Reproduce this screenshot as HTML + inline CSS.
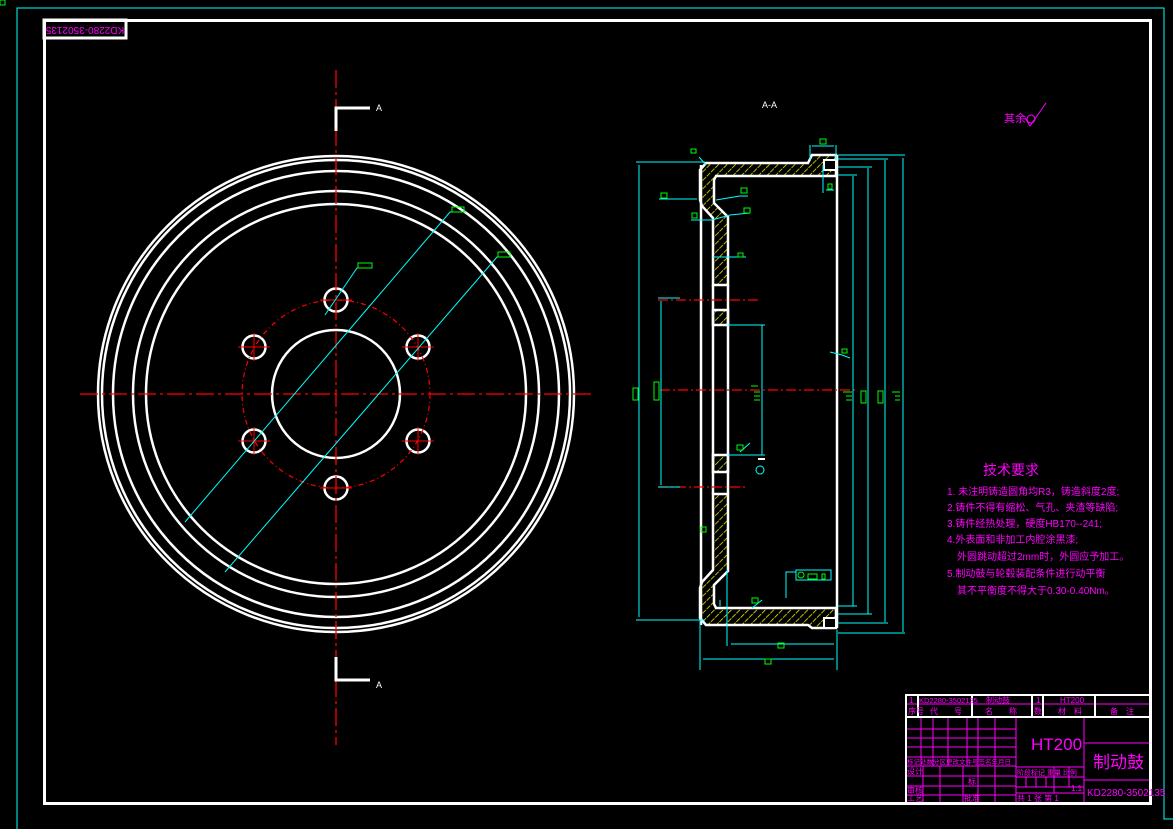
<!DOCTYPE html>
<html><head><meta charset="utf-8"><style>
html,body{margin:0;padding:0;background:#000;}
svg{display:block;}
text{font-family:"Liberation Sans","Noto Sans CJK SC",sans-serif;}
</style></head><body>
<svg width="1173" height="829" viewBox="0 0 1173 829" xmlns="http://www.w3.org/2000/svg">
<defs>
<pattern id="h" patternUnits="userSpaceOnUse" width="6" height="6" patternTransform="rotate(45)">
<rect width="6" height="6" fill="#000"/><line x1="0" y1="0" x2="0" y2="6" stroke="#e8e800" stroke-width="1.6" stroke-dasharray="3 1"/>
</pattern>
</defs>
<rect width="1173" height="829" fill="#000"/>
<!-- outer cyan -->
<polyline points="17,829 17,8 1164,8 1164,819 1173,819" fill="none" stroke="#00ffff" stroke-width="1"/>
<rect x="0" y="0" width="5" height="5" fill="none" stroke="#00ff00" stroke-width="1"/>
<!-- white frame -->
<rect x="44.5" y="20.5" width="1106" height="783" fill="none" stroke="#fff" stroke-width="3"/>
<rect x="44" y="20" width="82" height="18" fill="none" stroke="#fff" stroke-width="3"/>
<text x="85" y="33" fill="#ff00ff" font-size="10" text-anchor="middle" transform="rotate(180 85 30)">KD2280-3502135</text>

<!-- LEFT VIEW -->
<g fill="none" stroke="#fff" stroke-width="2.5">
<circle cx="336" cy="394" r="238"/>
<circle cx="336" cy="394" r="234"/>
<circle cx="336" cy="394" r="223"/>
<circle cx="336" cy="394" r="203"/>
<circle cx="336" cy="394" r="190"/>
<circle cx="336" cy="394" r="64"/>
<circle cx="336" cy="300" r="11.5"/>
<circle cx="254" cy="347" r="11.5"/>
<circle cx="418" cy="347" r="11.5"/>
<circle cx="254" cy="441" r="11.5"/>
<circle cx="418" cy="441" r="11.5"/>
<circle cx="336" cy="488" r="11.5"/>
</g>
<circle cx="336" cy="394" r="94" fill="none" stroke="#ff0000" stroke-width="1.2" stroke-dasharray="5 3 1 3"/>
<line x1="80" y1="394" x2="595" y2="394" stroke="#ff0000" stroke-width="1.3" stroke-dasharray="18 4 3 4"/>
<line x1="336" y1="70" x2="336" y2="745" stroke="#ff0000" stroke-width="1.3" stroke-dasharray="18 4 3 4"/>
<g stroke="#ff0000" stroke-width="1">
<line x1="320" y1="300" x2="352" y2="300"/><line x1="238" y1="347" x2="270" y2="347"/><line x1="402" y1="347" x2="434" y2="347"/>
<line x1="238" y1="441" x2="270" y2="441"/><line x1="402" y1="441" x2="434" y2="441"/><line x1="320" y1="488" x2="352" y2="488"/>
<line x1="254" y1="333" x2="254" y2="361"/><line x1="418" y1="333" x2="418" y2="361"/>
<line x1="254" y1="427" x2="254" y2="455"/><line x1="418" y1="427" x2="418" y2="455"/>
</g>
<g stroke="#00ffff" stroke-width="1" fill="none">
<polyline points="185,522 450,212 466,212"/>
<polyline points="225,572 497,257 511,257"/>
<polyline points="325,315 357,268 372,268"/>
</g>
<g fill="none" stroke="#00ff00" stroke-width="1">
<rect x="452" y="207" width="12" height="5"/><rect x="498" y="252" width="12" height="5"/><rect x="358" y="263" width="14" height="5"/>
</g>
<g stroke="#fff" stroke-width="3" fill="none">
<polyline points="336,131 336,108 370,108"/>
<polyline points="336,657 336,680 370,680"/>
</g>
<text x="376" y="111" fill="#fff" font-size="9">A</text>
<text x="376" y="688" fill="#fff" font-size="9">A</text>
<text x="762" y="108" fill="#fff" font-size="9">A-A</text>

<!-- SECTION VIEW -->
<!-- top hatched -->
<path d="M700,170 L706,163 L808,163 L812,155 L836,155 L836,176 L716,176 L714,180 L714,203 L728,217 L728,285 L713,285 L713,218 L702,206 L700,200 Z" fill="url(#h)" stroke="#fff" stroke-width="2.5"/>
<path d="M713,310 L728,310 L728,325 L713,325 Z" fill="url(#h)" stroke="#fff" stroke-width="2.5"/>
<path d="M713,455 L728,455 L728,472 L713,472 Z" fill="url(#h)" stroke="#fff" stroke-width="2.5"/>
<path d="M700,618 L706,625 L808,625 L812,628 L836,628 L836,608 L716,608 L714,604 L714,585 L728,571 L728,494 L713,494 L713,570 L702,582 L700,588 Z" fill="url(#h)" stroke="#fff" stroke-width="2.5"/>
<rect x="824" y="160" width="12" height="10" fill="#000" stroke="#fff" stroke-width="2"/>
<rect x="824" y="618" width="12" height="10" fill="#000" stroke="#fff" stroke-width="2"/>
<g stroke="#fff" stroke-width="2.5">
<line x1="701" y1="165" x2="701" y2="625"/>
<line x1="837" y1="155" x2="837" y2="628"/>
<line x1="713" y1="285" x2="713" y2="494"/>
<line x1="728" y1="285" x2="728" y2="494"/>
</g>
<line x1="658" y1="300" x2="758" y2="300" stroke="#ff0000" stroke-width="1.2" stroke-dasharray="10 3 2 3"/>
<line x1="658" y1="487" x2="745" y2="487" stroke="#ff0000" stroke-width="1.2" stroke-dasharray="10 3 2 3"/>
<line x1="660" y1="390" x2="855" y2="390" stroke="#ff0000" stroke-width="1.2" stroke-dasharray="10 3 2 3"/>
<g stroke="#00ffff" stroke-width="1" fill="none">
<line x1="636" y1="162" x2="705" y2="162"/><line x1="639" y1="165" x2="639" y2="617"/><line x1="636" y1="620" x2="705" y2="620"/>
<line x1="658" y1="298" x2="680" y2="298"/><line x1="661" y1="301" x2="661" y2="485"/><line x1="658" y1="487" x2="680" y2="487"/>
<line x1="728" y1="325" x2="765" y2="325"/><line x1="762" y1="325" x2="762" y2="455"/><line x1="728" y1="455" x2="765" y2="455"/>
<line x1="838" y1="155" x2="905" y2="155"/><line x1="903" y1="158" x2="903" y2="632"/><line x1="838" y1="633" x2="905" y2="633"/>
<line x1="838" y1="159" x2="888" y2="159"/><line x1="885" y1="160" x2="885" y2="622"/><line x1="838" y1="623" x2="888" y2="623"/>
<line x1="838" y1="167" x2="872" y2="167"/><line x1="868" y1="168" x2="868" y2="614"/><line x1="838" y1="614" x2="872" y2="614"/>
<line x1="838" y1="175" x2="857" y2="175"/><line x1="853" y1="176" x2="853" y2="606"/><line x1="838" y1="606" x2="857" y2="606"/>
<line x1="700" y1="620" x2="700" y2="670"/><line x1="837" y1="630" x2="837" y2="670"/>
<line x1="727" y1="570" x2="727" y2="646"/>
<line x1="731" y1="644" x2="834" y2="644"/><line x1="703" y1="659" x2="834" y2="659"/>
<line x1="810" y1="145" x2="810" y2="160"/><line x1="836" y1="145" x2="836" y2="160"/><line x1="812" y1="146" x2="834" y2="146"/>
<line x1="823" y1="165" x2="823" y2="193"/><line x1="826" y1="190" x2="834" y2="190"/>
<polyline points="659,199 697,199"/><polyline points="716,200 740,196 748,196"/>
<polyline points="691,220 712,220 730,215 750,213"/>
<polyline points="713,257 746,257"/>
<polyline points="699,157 706,165"/>
<polyline points="786,598 786,572 796,572"/>
<rect x="796" y="570" width="35" height="10"/>
<line x1="720" y1="600" x2="720" y2="606"/>
<polyline points="752,608 762,600"/>
<polyline points="740,452 750,443"/>
<polyline points="830,352 842,355 850,358"/>
</g>
<g fill="none" stroke="#00ff00" stroke-width="1">
<rect x="820" y="139" width="6" height="5"/><rect x="691" y="149" width="5" height="4"/>
<rect x="661" y="193" width="6" height="5"/><rect x="741" y="188" width="6" height="5"/>
<rect x="692" y="213" width="5" height="5"/><rect x="744" y="208" width="6" height="5"/>
<rect x="738" y="253" width="5" height="4"/><rect x="828" y="184" width="4" height="5"/>
<rect x="633" y="388" width="5" height="12"/><rect x="654" y="382" width="5" height="18"/>
<rect x="861" y="391" width="5" height="12"/><rect x="878" y="391" width="5" height="12"/>
<rect x="737" y="445" width="6" height="5"/><rect x="701" y="527" width="5" height="5"/>
<rect x="808" y="574" width="9" height="5"/><rect x="822" y="574" width="3" height="5"/>
<rect x="752" y="598" width="6" height="5"/><rect x="778" y="643" width="6" height="5"/>
<rect x="765" y="659" width="6" height="5"/><rect x="842" y="349" width="5" height="4"/>
<circle cx="801" cy="575" r="3"/><circle cx="760" cy="470" r="4" stroke="#00ffff"/>
</g>
<g stroke="#00ff00" stroke-width="1">
<line x1="751" y1="386" x2="758" y2="386"/><line x1="754" y1="392" x2="760" y2="392"/><line x1="754" y1="396" x2="760" y2="396"/><line x1="754" y1="400" x2="760" y2="400"/>
<line x1="843" y1="392" x2="852" y2="392"/><line x1="846" y1="396" x2="852" y2="396"/><line x1="846" y1="400" x2="852" y2="400"/>
<line x1="892" y1="392" x2="900" y2="392"/><line x1="895" y1="396" x2="900" y2="396"/><line x1="895" y1="400" x2="900" y2="400"/>
</g>
<line x1="758" y1="459" x2="765" y2="459" stroke="#fff" stroke-width="2"/>

<!-- roughness note -->
<text x="1004" y="122" fill="#ff00ff" font-size="11">其余</text>
<polyline points="1025,118 1030,126 1046,103" fill="none" stroke="#ff00ff" stroke-width="1"/>
<circle cx="1031" cy="119" r="4" fill="none" stroke="#ff00ff" stroke-width="1"/>

<!-- tech requirements -->
<g fill="#ff00ff" font-size="10">
<text x="983" y="475" font-size="14">技术要求</text>
<text x="947" y="495">1. 未注明铸造圆角均R3，铸造斜度2度;</text>
<text x="947" y="511">2.铸件不得有缩松、气孔、夹渣等缺陷;</text>
<text x="947" y="527">3.铸件经热处理，硬度HB170--241;</text>
<text x="947" y="543">4.外表面和非加工内腔涂黑漆;</text>
<text x="957" y="560">外圆跳动超过2mm时，外圆应予加工。</text>
<text x="947" y="577">5.制动鼓与轮毂装配条件进行动平衡</text>
<text x="957" y="594">其不平衡度不得大于0.30-0.40Nm。</text>
</g>

<!-- TITLE BLOCK -->
<g stroke="#ff00ff" stroke-width="1" fill="none">
<line x1="906" y1="704" x2="1150" y2="704"/>
<line x1="906" y1="729" x2="1016" y2="729"/><line x1="906" y1="738" x2="1016" y2="738"/>
<line x1="906" y1="747" x2="1016" y2="747"/><line x1="906" y1="757" x2="1016" y2="757"/>
<line x1="906" y1="766" x2="1016" y2="766"/><line x1="906" y1="776" x2="1016" y2="776"/>
<line x1="906" y1="786" x2="1016" y2="786"/><line x1="906" y1="795" x2="1016" y2="795"/>
<line x1="921" y1="717" x2="921" y2="766"/><line x1="933" y1="717" x2="933" y2="766"/>
<line x1="948" y1="717" x2="948" y2="766"/><line x1="967" y1="717" x2="967" y2="766"/>
<line x1="978" y1="717" x2="978" y2="766"/><line x1="995" y1="717" x2="995" y2="766"/>
<line x1="923" y1="766" x2="923" y2="803"/><line x1="940" y1="766" x2="940" y2="803"/>
<line x1="963" y1="766" x2="963" y2="803"/><line x1="978" y1="766" x2="978" y2="803"/><line x1="995" y1="766" x2="995" y2="803"/>
<line x1="1016" y1="717" x2="1016" y2="803"/><line x1="1084" y1="717" x2="1084" y2="803"/>
<line x1="1016" y1="767" x2="1084" y2="767"/><line x1="1016" y1="777" x2="1084" y2="777"/>
<line x1="1016" y1="787" x2="1084" y2="787"/><line x1="1016" y1="793" x2="1084" y2="793"/>
<line x1="1026" y1="777" x2="1026" y2="787"/><line x1="1036" y1="777" x2="1036" y2="787"/><line x1="1046" y1="777" x2="1046" y2="787"/>
<line x1="1054" y1="767" x2="1054" y2="793"/><line x1="1069" y1="767" x2="1069" y2="787"/>
<line x1="1084" y1="743" x2="1150" y2="743"/><line x1="1084" y1="780" x2="1150" y2="780"/>
</g>
<g stroke="#fff" stroke-width="2" fill="none">
<rect x="906" y="695" width="244" height="108"/>
<line x1="906" y1="717" x2="1150" y2="717"/>
<line x1="918" y1="695" x2="918" y2="717"/><line x1="972" y1="695" x2="972" y2="717"/>
<line x1="1032" y1="695" x2="1032" y2="717"/><line x1="1043" y1="695" x2="1043" y2="717"/>
<line x1="1095" y1="695" x2="1095" y2="717"/>
</g>
<g fill="#ff00ff" font-size="8">
<text x="909" y="703">1</text>
<text x="919" y="703" font-size="7.5">KD2280-3502135</text>
<text x="986" y="703">制动鼓</text>
<text x="1036" y="703">1</text>
<text x="1060" y="703">HT200</text>
<text x="908" y="714">序号</text><text x="930" y="714">代　　号</text><text x="985" y="714">名　　称</text>
<text x="1034" y="714">数</text><text x="1058" y="714">材　料</text><text x="1110" y="714">备　注</text>
<text x="907" y="764" font-size="6.5">标记处数分区更改文件号签名年月日</text>
<text x="907" y="774">设计</text><text x="968" y="784">标</text>
<text x="907" y="793">审核</text><text x="907" y="801">工艺</text><text x="964" y="801">批准</text>
<text x="1017" y="775" font-size="7">阶段标记 重量 比例</text>
<text x="1071" y="791">1:1</text>
<text x="1017" y="801">共 1 张 第 1</text>
<text x="1031" y="750" font-size="17">HT200</text>
<text x="1093" y="768" font-size="17">制动鼓</text>
<text x="1087" y="796" font-size="10">KD2280-3502135</text>
</g>
</svg>
</body></html>
